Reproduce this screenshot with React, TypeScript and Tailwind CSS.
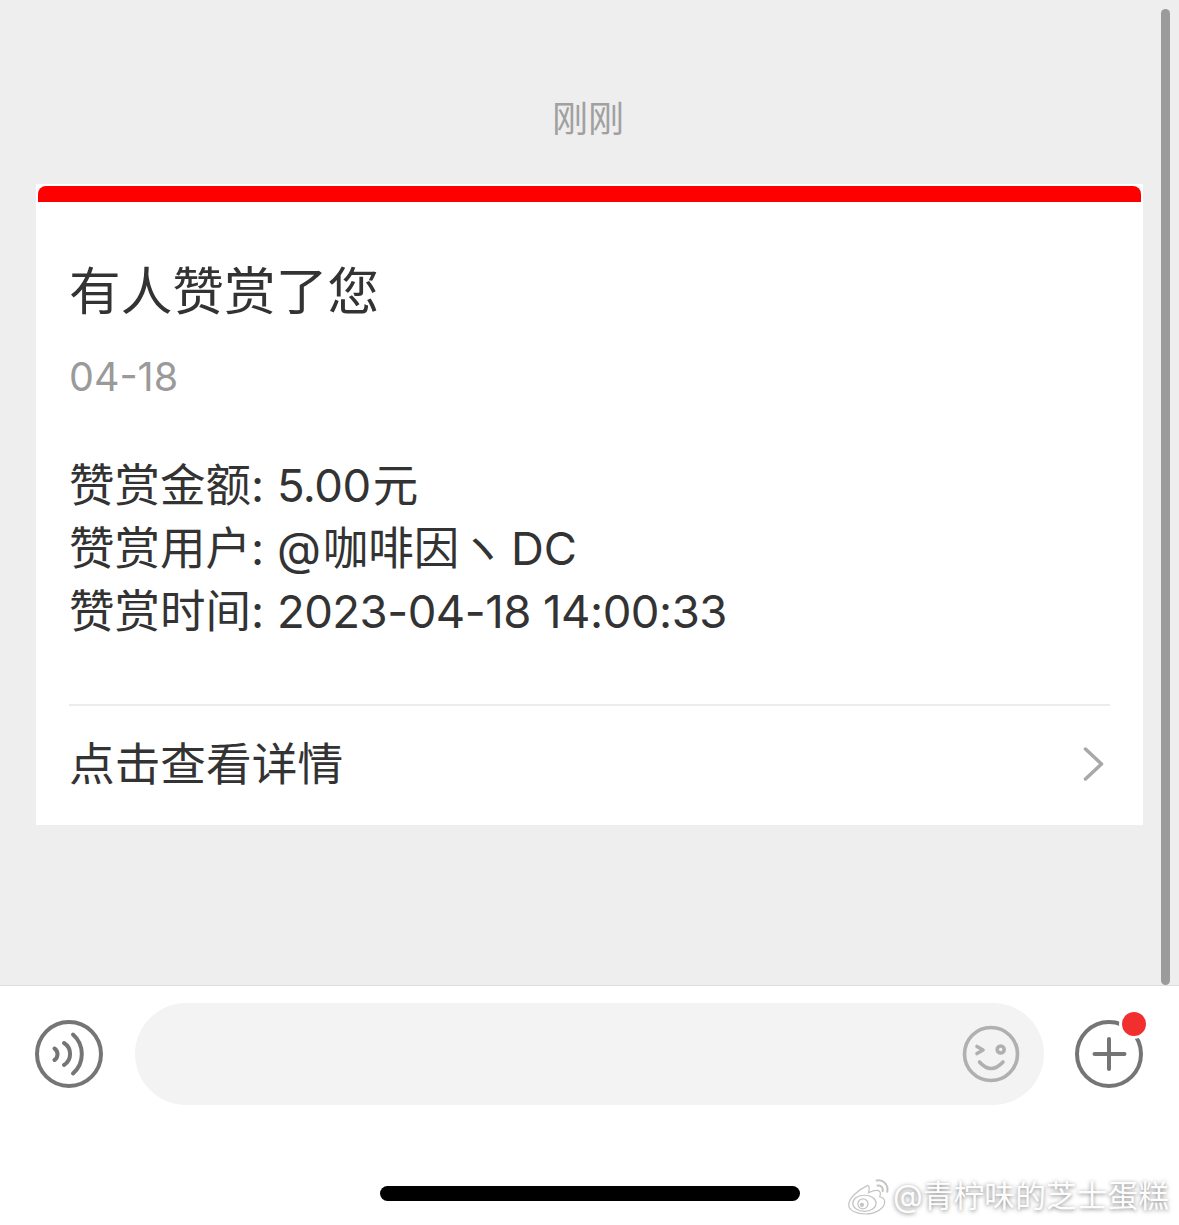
const font = "font-['PingFang_SC','Inter','Noto_Sans_CJK_SC',sans-serif]"

function VoiceIcon() {
  return (
    <svg width="70" height="70" viewBox="0 0 70 70" fill="none" stroke="#757575" strokeWidth="4" strokeLinecap="round" className="shrink-0">
      <circle cx="35" cy="35" r="32" />
      <path d="M20.500 29.500A7 7 0 0 1 20.500 41" />
      <path d="M30 24A13 13 0 0 1 30 46" />
      <path d="M39 15.500A26 26 0 0 1 39 54.500" />
    </svg>
  )
}

function SmileIcon() {
  return (
    <svg width="58" height="58" viewBox="0 0 58 58" fill="none" stroke="#b0b0b0" strokeWidth="3.6" strokeLinecap="round" strokeLinejoin="round" className="shrink-0">
      <circle cx="29" cy="29" r="26.500" />
      <path d="M15 21.500l6 3.500-6 3.500" />
      <circle cx="38.700" cy="24.500" r="3.500" />
      <path d="M17.500 37Q29 50 41 37" />
    </svg>
  )
}

function PlusIcon() {
  return (
    <div className="relative w-[70px] h-[70px] shrink-0">
      <svg width="70" height="70" viewBox="0 0 70 70" fill="none" stroke="#757575" strokeWidth="4" strokeLinecap="round">
        <circle cx="35" cy="35" r="32" />
        <path d="M35 20v30M20.500 35h30" />
      </svg>
      <div className="absolute -right-[2px] -top-[7px] w-[24px] h-[24px] rounded-full bg-[#f22f2f] ring-[3px] ring-white"></div>
    </div>
  )
}

function WeiboLogo() {
  return (
    <svg width="44" height="38" viewBox="0 0 41 37.500" fill="none" stroke="#c4c4c4" strokeWidth="1.200" className="shrink-0">
      <path d="M19 9C10 13 2 21 1.500 27c-.5 6 8 9.500 16.500 9.500 10 0 19-5.500 19-12 0-3-3-4.500-5-5 1-2.500 1-5-1-6-2.500-1-7 .5-10 2 1-3.500 1-6-.5-7-.5-.3-1-.2-1.500.5z" fill="#fff" />
      <ellipse cx="17" cy="26" rx="11.500" ry="8" />
      <circle cx="15.500" cy="26.500" r="5" />
      <circle cx="14.500" cy="27.500" r="1.500" fill="#c4c4c4" />
      <path d="M29 3.500c6-1.500 12 4 10.500 11M30 8.500c3.500-.5 5.500 2 5 5.500" strokeLinecap="round" strokeWidth="2" />
    </svg>
  )
}

export default function App() {
  return (
    <div className={`relative w-[1179px] h-[1225px] overflow-hidden bg-white flex flex-col ${font}`}>
      {/* scrollbar */}
      <div className="absolute left-[1161px] top-[9px] w-[9px] h-[976px] rounded-full bg-[#9b9b9b] z-10"></div>

      {/* chat area */}
      <div className="h-[986px] shrink-0 bg-[#eeeeee] border-b border-[#dcdcdc] flex flex-col items-center px-[36px]">
        <div className="h-[184px] w-full shrink-0 pt-[94px] pr-[3px] text-center text-[36px] leading-[50px] text-[#a0a0a0]">刚刚</div>

        <div className="w-full h-[641px] bg-white pt-[2px] flex flex-col">
          <div className="h-[16px] mx-[2px] shrink-0 bg-[#ff0000] rounded-t-[8px]"></div>
          <div className="px-[33px] flex-1 flex flex-col">
            <h1 className="mt-[59px] text-[51.700px] leading-[60px] font-normal text-[#333333]">有人赞赏了您</h1>
            <p className="mt-[29px] text-[39.500px] leading-[54px] text-[#9a9a9a]">04-18</p>
            <div className="mt-[50px] text-[45.500px] leading-[63px] text-[#333333]">
              <p>赞赏金额: <span className="tracking-[-0.5px]">5.00</span><span className="ml-[2px]">元</span></p>
              <p>赞赏用户: @<span className="ml-[2px]">咖啡因ヽ</span><span className="ml-[6px]">DC</span></p>
              <p>赞赏时间: <span className="tracking-[-0.5px]">2023-04-18 14:00:33</span></p>
            </div>
            <div className="mt-[61px] border-t-2 border-[#ececec] flex-1 flex items-center justify-between pb-[2px]">
              <span className="text-[45.700px] leading-[60px] text-[#333333]">点击查看详情</span>
              <svg width="24" height="36" viewBox="0 0 24 36" fill="none" stroke="#a8a8a8" strokeWidth="3.500" strokeLinecap="round" strokeLinejoin="round" className="mr-[5px] mb-[2px]">
                <path d="M4.500 3L20.500 18 4.500 33" />
              </svg>
            </div>
          </div>
        </div>
      </div>

      {/* input bar */}
      <div className="flex items-center h-[136px] shrink-0 pl-[34px] pr-[35px]">
        <VoiceIcon />
        <div className="ml-[31px] mr-[30px] flex-1 h-[102px] rounded-full bg-[#f3f3f3] flex items-center justify-end pr-[24px]">
          <SmileIcon />
        </div>
        <PlusIcon />
      </div>

      {/* home indicator + watermark */}
      <div className="relative flex-1 flex justify-center pt-[64px] pl-[1px]">
        <div className="w-[420px] h-[15px] rounded-full bg-black"></div>
        <div className="absolute left-[846px] top-[55px] flex items-center gap-[3px]">
          <WeiboLogo />
          <span className="text-[30.800px] leading-[38px] whitespace-nowrap text-[#fdfdfd] [text-shadow:0_1px_4px_rgba(0,0,0,0.5)]">@青柠味的芝士蛋糕</span>
        </div>
      </div>
    </div>
  )
}
